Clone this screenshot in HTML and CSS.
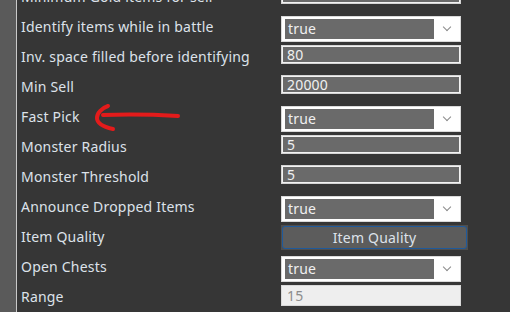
FILE: index.html
```html
<!DOCTYPE html>
<html lang="en">
<head>
  <meta charset="UTF-8">
  <title>Settings</title>
  <link rel="stylesheet" href="styles.css">
</head>
<body>
  <div class="page">
    <div class="sidebar"></div>

    <div class="settings">
      <div class="row"><span class="label">Minimum Gold items for sell</span><div class="textbox">0</div></div>
      <div class="row"><span class="label">Identify items while in battle</span><div class="dropdown"><span class="value">true</span><span class="chevron"></span></div></div>
      <div class="row"><span class="label">Inv. space filled before identifying</span><div class="textbox">80</div></div>
      <div class="row"><span class="label">Min Sell</span><div class="textbox">20000</div></div>
      <div class="row"><span class="label">Fast Pick</span><div class="dropdown"><span class="value">true</span><span class="chevron"></span></div></div>
      <div class="row"><span class="label">Monster Radius</span><div class="textbox">5</div></div>
      <div class="row"><span class="label">Monster Threshold</span><div class="textbox">5</div></div>
      <div class="row"><span class="label">Announce Dropped Items</span><div class="dropdown"><span class="value">true</span><span class="chevron"></span></div></div>
      <div class="row"><span class="label">Item Quality</span><div class="btn-wrap"><button class="btn">Item Quality</button></div></div>
      <div class="row"><span class="label">Open Chests</span><div class="dropdown"><span class="value">true</span><span class="chevron"></span></div></div>
      <div class="row"><span class="label">Range</span><div class="textbox disabled">15</div></div>
    </div>

    <!-- hand-drawn annotation -->
    <svg class="arrow" width="90" height="30" viewBox="0 0 90 30">
      <path d="M87 13 C70 12, 40 11, 12 12" fill="none" stroke="#e31b1b" stroke-width="4" stroke-linecap="round"/>
      <path d="M17 3 C11 5, 6 10, 6 15 C6 21, 13 24, 22 26" fill="none" stroke="#e31b1b" stroke-width="4" stroke-linecap="round"/>
    </svg>
  </div>
</body>
</html>
```

FILE: styles.css
```css
body {
  margin: 0;
  background: #363636;
  font-family: "Noto Sans", "Open Sans", sans-serif;
  font-size: 14px;
  letter-spacing: 0.2px;
  color: #dde2ea;
  overflow: hidden;
}
.page {
  position: relative;
  display: flex;
  height: 312px;
}
.sidebar {
  width: 16px;
  background: #5a5a5a;
  border-right: 1px solid #c9c9c9;
  flex-shrink: 0;
}
.settings {
  display: grid;
  grid-template-columns: 260px 200px;
  grid-auto-rows: 30px;
  margin-top: -16px;
  padding-left: 4px;
}
.row {
  display: contents;
}
.label {
  line-height: 26px;
  white-space: nowrap;
}
.textbox {
  margin-top: 1px;
  width: 173px;
  height: 17px;
  line-height: 17px;
  background: #6a6a6a;
  border: 1px solid #d4d4d4;
  box-shadow: inset 0 0 0 1px #f2f2f2;
  padding-left: 5px;
  color: #f0f0f0;
}
.textbox.disabled {
  background: #eeeeee;
  border-color: #d9d9d9;
  box-shadow: none;
  color: #8c8c8c;
  height: 19px;
  line-height: 19px;
}
.dropdown {
  margin-top: 2px;
  width: 180px;
  height: 26px;
  box-sizing: border-box;
  background: #ffffff;
  border: 1px solid #dadada;
  padding: 2px 2px 2px 3px;
  display: flex;
  align-items: center;
}
.dropdown .value {
  width: 146px;
  height: 20px;
  line-height: 20px;
  background: #6a6a6a;
  color: #f0f0f0;
  padding-left: 3px;
}
.chevron {
  width: 5px;
  height: 5px;
  border-right: 1px solid #8a8a8a;
  border-bottom: 1px solid #8a8a8a;
  transform: rotate(45deg);
  margin: -4px 0 0 10px;
}
.btn-wrap {
  margin-top: 1px;
  width: 187px;
  height: 25px;
  background: #4e4e4e;
  padding: 1px;
  box-sizing: border-box;
}
.btn {
  width: 100%;
  height: 100%;
  background: #5c5c5c;
  border: 1px solid #1f5a9c;
  border-radius: 3px;
  color: #dde2ea;
  font-family: inherit;
  font-size: 14px;
  letter-spacing: 0.2px;
  padding: 0;
}
.arrow {
  position: absolute;
  left: 91px;
  top: 103px;
}
```
